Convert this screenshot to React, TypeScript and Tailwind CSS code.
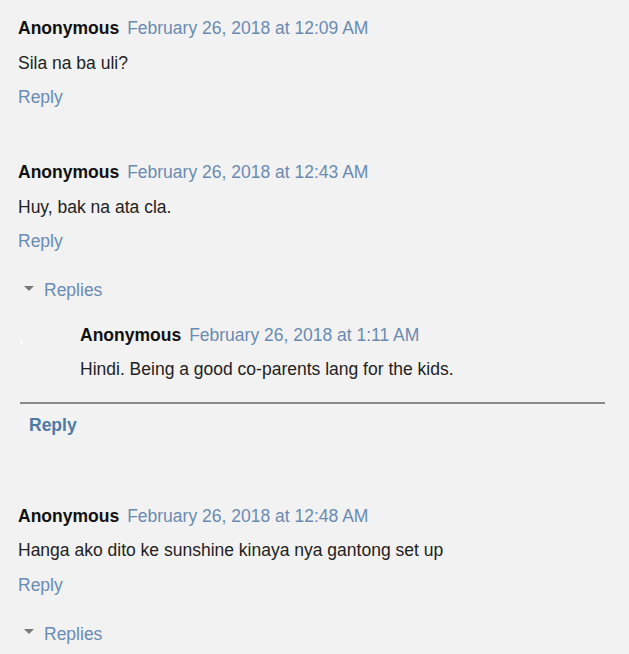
import React from "react";

const Line = ({ children, className = "" }: { children: React.ReactNode; className?: string }) => (
  <div className={`h-[34.5px] flex items-center whitespace-nowrap ${className}`}>{children}</div>
);

const Header = ({ date }: { date: string }) => (
  <Line>
    <span className="font-bold text-[#111]">Anonymous</span>
    <span className="ml-[8px] text-[#6a8bb1]">{date}</span>
  </Line>
);

const Replies = ({ className = "" }: { className?: string }) => (
  <Line className={className}>
    <span className="ml-[6px] mr-[10px] inline-block w-0 h-0 border-l-[5px] border-r-[5px] border-t-[5px] border-l-transparent border-r-transparent border-t-[#7a7a7a] -translate-y-[2px]" />
    <span className="text-[#6a8bb1]">Replies</span>
  </Line>
);

export default function App() {
  return (
    <div
      className="w-[629px] h-[654px] overflow-hidden bg-[#f2f2f2] text-[17.5px] text-[#222]"
      style={{ fontFamily: '"Liberation Sans", Arial, sans-serif' }}
    >
      <div className="pl-[18px] pt-[11px]">
        <Header date="February 26, 2018 at 12:09 AM" />
        <Line>Sila na ba uli?</Line>
        <Line className="text-[#6a8bb1]">Reply</Line>
      </div>

      <div className="pl-[18px] mt-[40.5px]">
        <Header date="February 26, 2018 at 12:43 AM" />
        <Line>Huy, bak na ata cla.</Line>
        <Line className="text-[#6a8bb1]">Reply</Line>
        <Replies className="mt-[14.5px]" />
      </div>

      <div className="mt-[10px] relative pl-[80px]">
        <div className="absolute left-[20px] top-[23px] w-[3px] h-[3px] rounded-full bg-white" />
        <Header date="February 26, 2018 at 1:11 AM" />
        <Line>Hindi. Being a good co-parents lang for the kids.</Line>
      </div>
      <div className="ml-[20px] w-[585px] h-[2px] bg-[#8a8a8a] mt-[15px]" />
      <Line className="pl-[29px] mt-[4px] font-bold text-[#4d7aa6]">Reply</Line>

      <div className="pl-[18px] mt-[56.5px]">
        <Header date="February 26, 2018 at 12:48 AM" />
        <Line>Hanga ako dito ke sunshine kinaya nya gantong set up</Line>
        <Line className="text-[#6a8bb1]">Reply</Line>
        <Replies className="mt-[14.5px]" />
      </div>
    </div>
  );
}
